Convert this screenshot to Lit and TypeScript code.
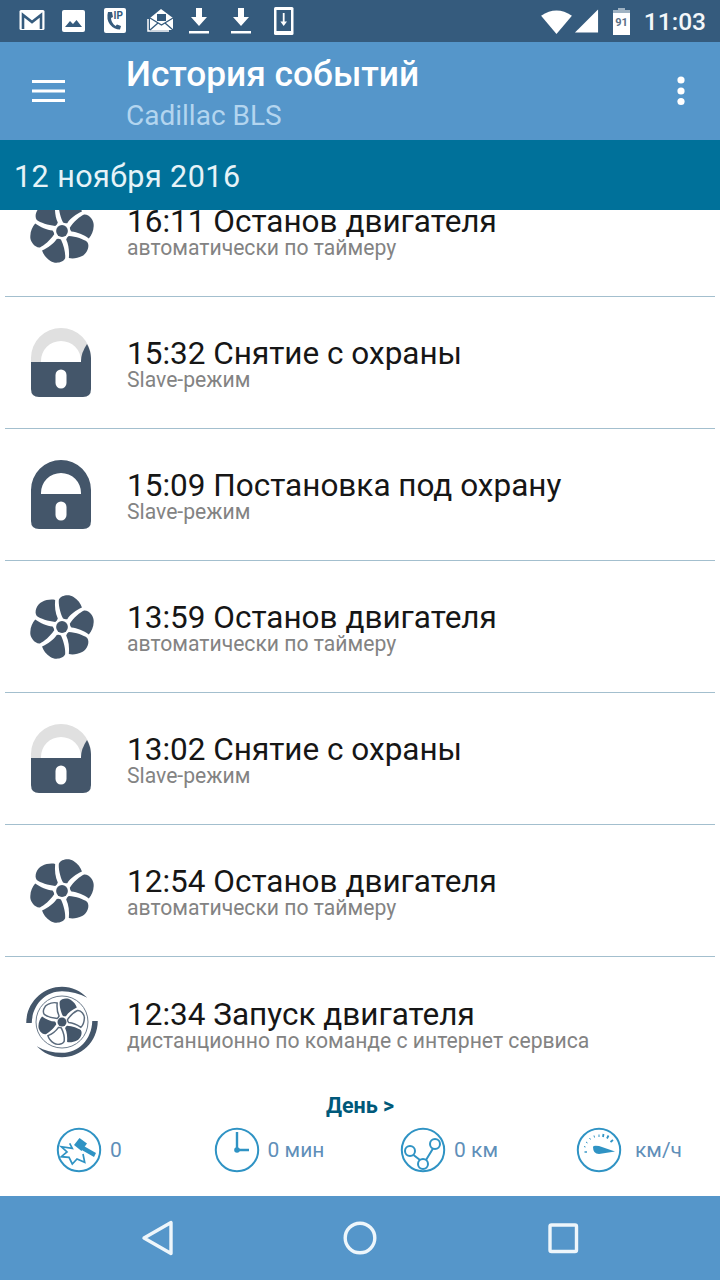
import { LitElement, html, css, svg } from "lit";
import { customElement } from "lit/decorators.js";

const BLADE = "M1 -8 C-2 -14 -3.500 -22 -3 -26 C-1 -30.500 7 -31.500 11 -28.500 C15 -26 18 -22 19 -18.500 C13.500 -16 8 -12 5 -7.500 Q3 -7 1 -8 Z";

const fan = () => html`<svg class="ico" viewBox="-38 -38 76 76">
  <g fill="#44566a" transform="scale(1.05)">
    ${[0, 60, 120, 180, 240, 300].map((a) => svg`<path d=${BLADE} transform="rotate(${a})"></path>`)}
    <circle r="5.600"></circle>
  </g>
</svg>`;

const lock = (open: boolean) => html`<svg class="ico" viewBox="-38 -38 76 76">
  <g transform="translate(-1 0)">
    <path d="M-30 0 V-5 A30 30 0 0 1 30 -5 V0 H20 V-2 A20 20 0 0 0 -20 -2 V0 Z" fill=${open ? "#e0e0e0" : "#44566a"}></path>
    ${open ? svg`<path d="M26 -19 A30 30 0 0 1 30 -5 V0 H20 V-2 Q20 -10 26 -19 Z" fill="#44566a"></path>` : ""}
    <path d="M-30 -1 H30 V26 Q30 34 22 34 H-22 Q-30 34 -30 26 Z" fill="#44566a"></path>
    <rect x="-5.500" y="6.500" width="11" height="19" rx="5.500" fill="#fff"></rect>
  </g>
</svg>`;

const ARC = "M-32.500 1 C-32.500 -18 -17 -32 0 -32 C9 -32 17 -28 23 -22 C16 -26 8 -28 0 -28 C-15 -28 -27 -16 -27.500 1 Z";

const start = () => html`<svg class="ico" viewBox="-38 -38 76 76">
  <g transform="translate(0 -1)">
    <g fill="#44566a">
      <path d=${ARC} transform="scale(1.1)"></path>
      <path d=${ARC} transform="rotate(180) scale(1.1)"></path>
      <circle r="4.500"></circle>
    </g>
    <circle r="26" fill="none" stroke="#6d7c8c" stroke-width="1"></circle>
    ${[0, 120, 240].map((a) => svg`<path d=${BLADE} transform="rotate(${a}) scale(.78)" fill="#44566a"></path>`)}
    ${[60, 180, 300].map((a) => svg`<path d=${BLADE} transform="rotate(${a}) scale(.74)" fill="#fff" stroke="#5a6a7c" stroke-width="2"></path>`)}
  </g>
</svg>`;

const ROWS = [
  { i: fan, t: "16:11 Останов двигателя", s: "автоматически по таймеру" },
  { i: () => lock(true), t: "15:32 Снятие с охраны", s: "Slave-режим" },
  { i: () => lock(false), t: "15:09 Постановка под охрану", s: "Slave-режим" },
  { i: fan, t: "13:59 Останов двигателя", s: "автоматически по таймеру" },
  { i: () => lock(true), t: "13:02 Снятие с охраны", s: "Slave-режим" },
  { i: fan, t: "12:54 Останов двигателя", s: "автоматически по таймеру" },
  { i: start, t: "12:34 Запуск двигателя", s: "дистанционно по команде с интернет сервиса" },
];

const ring = svg`<circle cx="23" cy="23" r="21.200" fill="none" stroke="#2f93c4" stroke-width="2"></circle>`;

const STATS = [
  {
    v: "0",
    gap: "",
    i: svg`${ring}
      <path d="M13.700 16.300 L16.300 21.300 L5.300 19.700 L11 25 L5.300 29.700 L13 30.300 L16.300 37 L21 32 L28.700 35.300 L27 27" fill="none" stroke="#2f93c4" stroke-width="1.700"></path>
      <path d="M18 18 L23.500 11 L31 16.500 L25.500 24 Z" fill="#2f93c4"></path>
      <path d="M26 18 L40 26 L38 30 L24 22 Z" fill="#2f93c4"></path>`,
  },
  {
    v: "0 мин",
    gap: "",
    i: svg`${ring}
      <path d="M23 5 V23 H35" fill="none" stroke="#2f93c4" stroke-width="2.400"></path>
      <circle cx="23" cy="23" r="2.800" fill="#2f93c4"></circle>`,
  },
  {
    v: "0 км",
    gap: "",
    i: svg`${ring}
      <g fill="none" stroke="#2f93c4" stroke-width="2">
        <circle cx="10" cy="24" r="5"></circle>
        <circle cx="35" cy="17" r="5"></circle>
        <circle cx="23" cy="37" r="5"></circle>
        <path d="M13.500 28 L20 33 M26 33 L33 21.500"></path>
      </g>`,
  },
  {
    v: "км/ч",
    gap: "wide",
    i: svg`${ring}
      <path d="M17 20 Q17 27 23 27 L39 24.500 L23 19 Q17 18 17 20 Z" fill="#2f93c4"></path>
      <g stroke="#2f93c4" fill="none">
        <path d="M34.500 15 L37 13 M31 11.500 L32.500 8.500 M27 10 L27.500 7" stroke-width="1.800"></path>
        <path d="M23 10 V7.500 M18.500 10.500 L18 8.500 M14.500 12.500 L13.500 11 M11.500 16 L10 15 M9.500 20 L8 19.500" stroke-width="1"></path>
        <path d="M8.500 25 L11 25" stroke-width="1.400"></path>
      </g>`,
  },
];

@customElement("app-root")
export class AppRoot extends LitElement {
  static styles = css`
    :host {
      display: flex;
      flex-direction: column;
      width: 720px;
      height: 1280px;
      background: #fff;
      font-family: Roboto, "Noto Sans", sans-serif;
      overflow: hidden;
    }
    .status {
      flex: none;
      height: 42px;
      background: #355b7d;
      display: flex;
      align-items: center;
      padding-left: 10px;
      color: #fff;
    }
    .slot {
      width: 42px;
      height: 42px;
      display: block;
      flex: none;
    }
    .spacer { flex: 1; }
    .wifi { width: 33px; height: 27px; flex: none; }
    .signal { width: 25px; height: 26px; flex: none; margin-left: 1px; }
    .batt { width: 19px; height: 27px; flex: none; margin-left: 13px; }
    .clock {
      font-size: 24.500px;
      font-weight: 500;
      margin: 0 14px 0 13px;
      color: #f3f7fa;
    }
    .appbar {
      flex: none;
      height: 98px;
      background: #5596ca;
      display: flex;
      align-items: center;
      color: #fff;
    }
    .burger {
      width: 34px;
      height: 24px;
      margin-left: 32px;
      flex: none;
    }
    .heads {
      margin-left: 60px;
      padding-top: 5px;
      flex: 1;
      display: flex;
      flex-direction: column;
    }
    .title {
      font-size: 35.300px;
      font-weight: 500;
      line-height: 42px;
      color: #fff;
    }
    .sub {
      font-size: 28px;
      line-height: 36px;
      margin-top: 3px;
      color: #b3d5ef;
    }
    .dots {
      width: 8px;
      height: 30px;
      margin-right: 35px;
      flex: none;
    }
    .date {
      flex: none;
      height: 70px;
      background: #00719a;
      color: #e6f3f8;
      font-size: 30.500px;
      line-height: 74px;
      padding-left: 14px;
      letter-spacing: 0.450px;
    }
    .list {
      flex: 1;
      min-height: 0;
      overflow: hidden;
    }
    .rows {
      margin-top: -45px;
    }
    .row {
      height: 132px;
      box-sizing: border-box;
      margin: 0 5px;
      padding-left: 19px;
      display: flex;
      align-items: center;
      gap: 27px;
      border-bottom: 1px solid #a3bfce;
    }
    .row:last-child { border-bottom: 0; }
    .ico {
      width: 76px;
      height: 76px;
      flex: none;
    }
    .txt {
      display: flex;
      flex-direction: column;
      padding-top: 4px;
    }
    .t {
      font-size: 31.500px;
      line-height: 31px;
      color: #161616;
      white-space: nowrap;
    }
    .s {
      font-size: 21.150px;
      line-height: 22px;
      color: #838383;
      white-space: nowrap;
    }
    .foot {
      flex: none;
      height: 107px;
      box-sizing: border-box;
      padding-top: 5px;
      display: flex;
      flex-direction: column;
    }
    .day {
      text-align: center;
      font-size: 21.500px;
      font-weight: 700;
      line-height: 24px;
      color: #00597a;
    }
    .stats {
      display: grid;
      grid-template-columns: repeat(4, 1fr);
      margin-top: 9px;
    }
    .stat {
      display: flex;
      align-items: center;
      justify-content: center;
      gap: 8px;
      font-size: 21px;
      color: #5f8fb9;
    }
    .stat svg {
      width: 46px;
      height: 46px;
      flex: none;
      margin-left: -2px;
    }
    .stat.wide { gap: 13px; }
    .nav {
      flex: none;
      height: 84px;
      background: #5596ca;
      display: flex;
      align-items: center;
      justify-content: center;
      gap: 163px;
    }
    .nav svg {
      width: 40px;
      height: 40px;
      flex: none;
    }
  `;

  render() {
    return html`
      <div class="status">
        <svg class="slot" viewBox="0 0 42 42">
          <rect x="9.500" y="10" width="25" height="20" rx="1.500" fill="#fff"></rect>
          <path d="M13 29 V15 L22 22 L31 15 V29" fill="none" stroke="#355b7d" stroke-width="2.600"></path>
        </svg>
        <svg class="slot" viewBox="0 0 42 42">
          <rect x="10" y="10" width="23" height="22" rx="2" fill="#fff"></rect>
          <path d="M13 27 L18 21 L21 24 L24.500 20 L30 27 Z" fill="#355b7d"></path>
        </svg>
        <svg class="slot" viewBox="0 0 42 42">
          <rect x="10" y="8" width="22" height="25" rx="2" fill="#fff"></rect>
          <path d="M14 12 Q12 19 16 24.500 Q20 29.500 26 29.500 L27 26 L23 24.500 L21.500 26 Q17 22.500 17 18 L19 17 L18 12 Z" fill="#355b7d"></path>
          <text x="19.500" y="19" font-family="Roboto" font-size="10" font-weight="700" fill="#355b7d">IP</text>
        </svg>
        <svg class="slot" viewBox="0 0 42 42">
          <path d="M12 19 V31 H33" fill="none" stroke="#fff" stroke-width="1.500"></path>
          <path d="M14 18 L25 9 L37 18 L37 30 H14 Z" fill="#fff"></path>
          <path d="M14 18 L25.500 25 L37 18 M14 30 L22 23 M37 30 L29 23" fill="none" stroke="#355b7d" stroke-width="1.300"></path>
          <rect x="21" y="14" width="9" height="7" fill="#355b7d"></rect>
        </svg>
        <svg class="slot" viewBox="0 0 42 42">
          <path d="M18 8 H24 V17 H29 L21 26 L13 17 H18 Z M11 31 H31 V33.500 H11 Z" fill="#fff"></path>
        </svg>
        <svg class="slot" viewBox="0 0 42 42">
          <path d="M18 8 H24 V17 H29 L21 26 L13 17 H18 Z M11 31 H31 V33.500 H11 Z" fill="#fff"></path>
        </svg>
        <svg class="slot" viewBox="0 0 42 42">
          <rect x="12" y="7" width="19.500" height="28" rx="1.500" fill="#fff"></rect>
          <rect x="14.500" y="10" width="14.500" height="21" fill="#355b7d"></rect>
          <path d="M20.800 13 H22.600 V21.500 H25 L21.700 26 L18.400 21.500 H20.800 Z" fill="#fff"></path>
        </svg>
        <div class="spacer"></div>
        <svg class="wifi" viewBox="0 0 34 28">
          <path d="M1 8 Q17 -3 33 8 L17 27 Z" fill="#fff"></path>
        </svg>
        <svg class="signal" viewBox="0 0 26 26">
          <path d="M1 25 L25 1 V25 Z" fill="#fff"></path>
        </svg>
        <svg class="batt" viewBox="0 0 19 27">
          <rect x="6" y="0" width="7" height="3" fill="#9fb2c2"></rect>
          <rect x="1" y="2" width="17" height="4" fill="#9fb2c2"></rect>
          <rect x="1" y="5" width="17" height="22" fill="#fff"></rect>
          <text x="9.500" y="17.500" text-anchor="middle" font-family="Roboto" font-size="11" font-weight="700" fill="#5c7086">91</text>
        </svg>
        <span class="clock">11:03</span>
      </div>
      <div class="appbar">
        <svg class="burger" viewBox="0 0 34 24">
          <path d="M0 2.500 H33 M0 12 H33 M0 21.500 H33" stroke="#fff" stroke-width="3" fill="none"></path>
        </svg>
        <div class="heads">
          <div class="title">История событий</div>
          <div class="sub">Cadillac BLS</div>
        </div>
        <svg class="dots" viewBox="0 0 8 30">
          <circle cx="4" cy="4" r="3.600" fill="#fff"></circle>
          <circle cx="4" cy="15" r="3.600" fill="#fff"></circle>
          <circle cx="4" cy="25.500" r="3.600" fill="#fff"></circle>
        </svg>
      </div>
      <div class="date">12 ноября 2016</div>
      <div class="list">
        <div class="rows">
          ${ROWS.map(
            (r) => html`<div class="row">
              ${r.i()}
              <div class="txt">
                <div class="t">${r.t}</div>
                <div class="s">${r.s}</div>
              </div>
            </div>`,
          )}
        </div>
      </div>
      <div class="foot">
        <div class="day">День &gt;</div>
        <div class="stats">
          ${STATS.map(
            (s) => html`<div class="stat ${s.gap}">
              <svg viewBox="0 0 46 46">${s.i}</svg>
              <span>${s.v}</span>
            </div>`,
          )}
        </div>
      </div>
      <div class="nav">
        <svg viewBox="0 0 40 40">
          <path d="M34 4.500 V35.500 L7 20 Z" fill="none" stroke="#eef6fb" stroke-width="3.400" stroke-linejoin="round"></path>
        </svg>
        <svg viewBox="0 0 40 40">
          <circle cx="20" cy="20" r="14.800" fill="none" stroke="#eef6fb" stroke-width="3.400"></circle>
        </svg>
        <svg viewBox="0 0 40 40">
          <rect x="7" y="7" width="26.500" height="26.500" rx="1.500" fill="none" stroke="#eef6fb" stroke-width="3.400"></rect>
        </svg>
      </div>
    `;
  }
}
